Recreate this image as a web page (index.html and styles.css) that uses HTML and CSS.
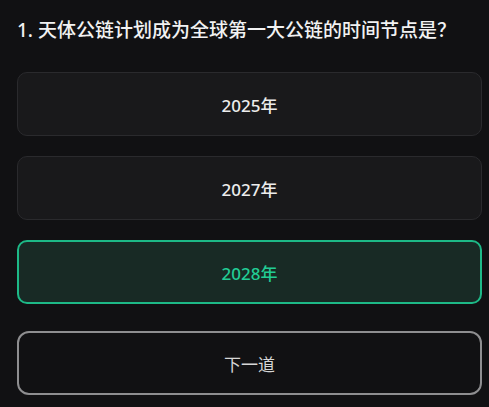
FILE: index.html
```html
<!DOCTYPE html>
<html lang="zh">
<head>
<meta charset="utf-8">
<link rel="stylesheet" href="styles.css">
</head>
<body>
<div class="page">
  <h1 class="question">1. 天体公链计划成为全球第一大公链的时间节点是？</h1>
  <div class="options">
    <div class="option">2025年</div>
    <div class="option">2027年</div>
    <div class="option selected">2028年</div>
  </div>
  <button class="next">下一道</button>
</div>
</body>
</html>
```

FILE: styles.css
```css
html, body {
  margin: 0;
  padding: 0;
  background: #111113;
}
.page {
  width: 489px;
  height: 407px;
  box-sizing: border-box;
  padding: 16px 7px 0 17px;
  font-family: "Noto Sans", "Noto Sans CJK SC", sans-serif;
  color: #f0f0f0;
}
.question {
  margin: 0;
  font-size: 19px;
  font-weight: 500;
  line-height: 28px;
  height: 28px;
  color: #f2f2f2;
  white-space: nowrap;
}
.options {
  margin-top: 28px;
  display: flex;
  flex-direction: column;
  gap: 20px;
}
.option {
  height: 64px;
  box-sizing: border-box;
  border: 1px solid #2a2a2d;
  border-radius: 10px;
  background: #19191b;
  display: flex;
  align-items: center;
  justify-content: center;
  font-size: 17px;
  font-weight: 500;
  color: #ececec;
}
.option.selected {
  border: 2px solid #1db987;
  background: #182a25;
  color: #22cc95;
}
.next {
  margin-top: 27px;
  width: 100%;
  height: 64px;
  box-sizing: border-box;
  border: 2px solid #8e8e90;
  border-radius: 12px;
  background: #111113;
  color: #d6d6d6;
  font-family: "Noto Sans CJK SC", sans-serif;
  font-size: 17px;
  font-weight: 400;
  display: flex;
  align-items: center;
  justify-content: center;
  padding: 0;
}
```
